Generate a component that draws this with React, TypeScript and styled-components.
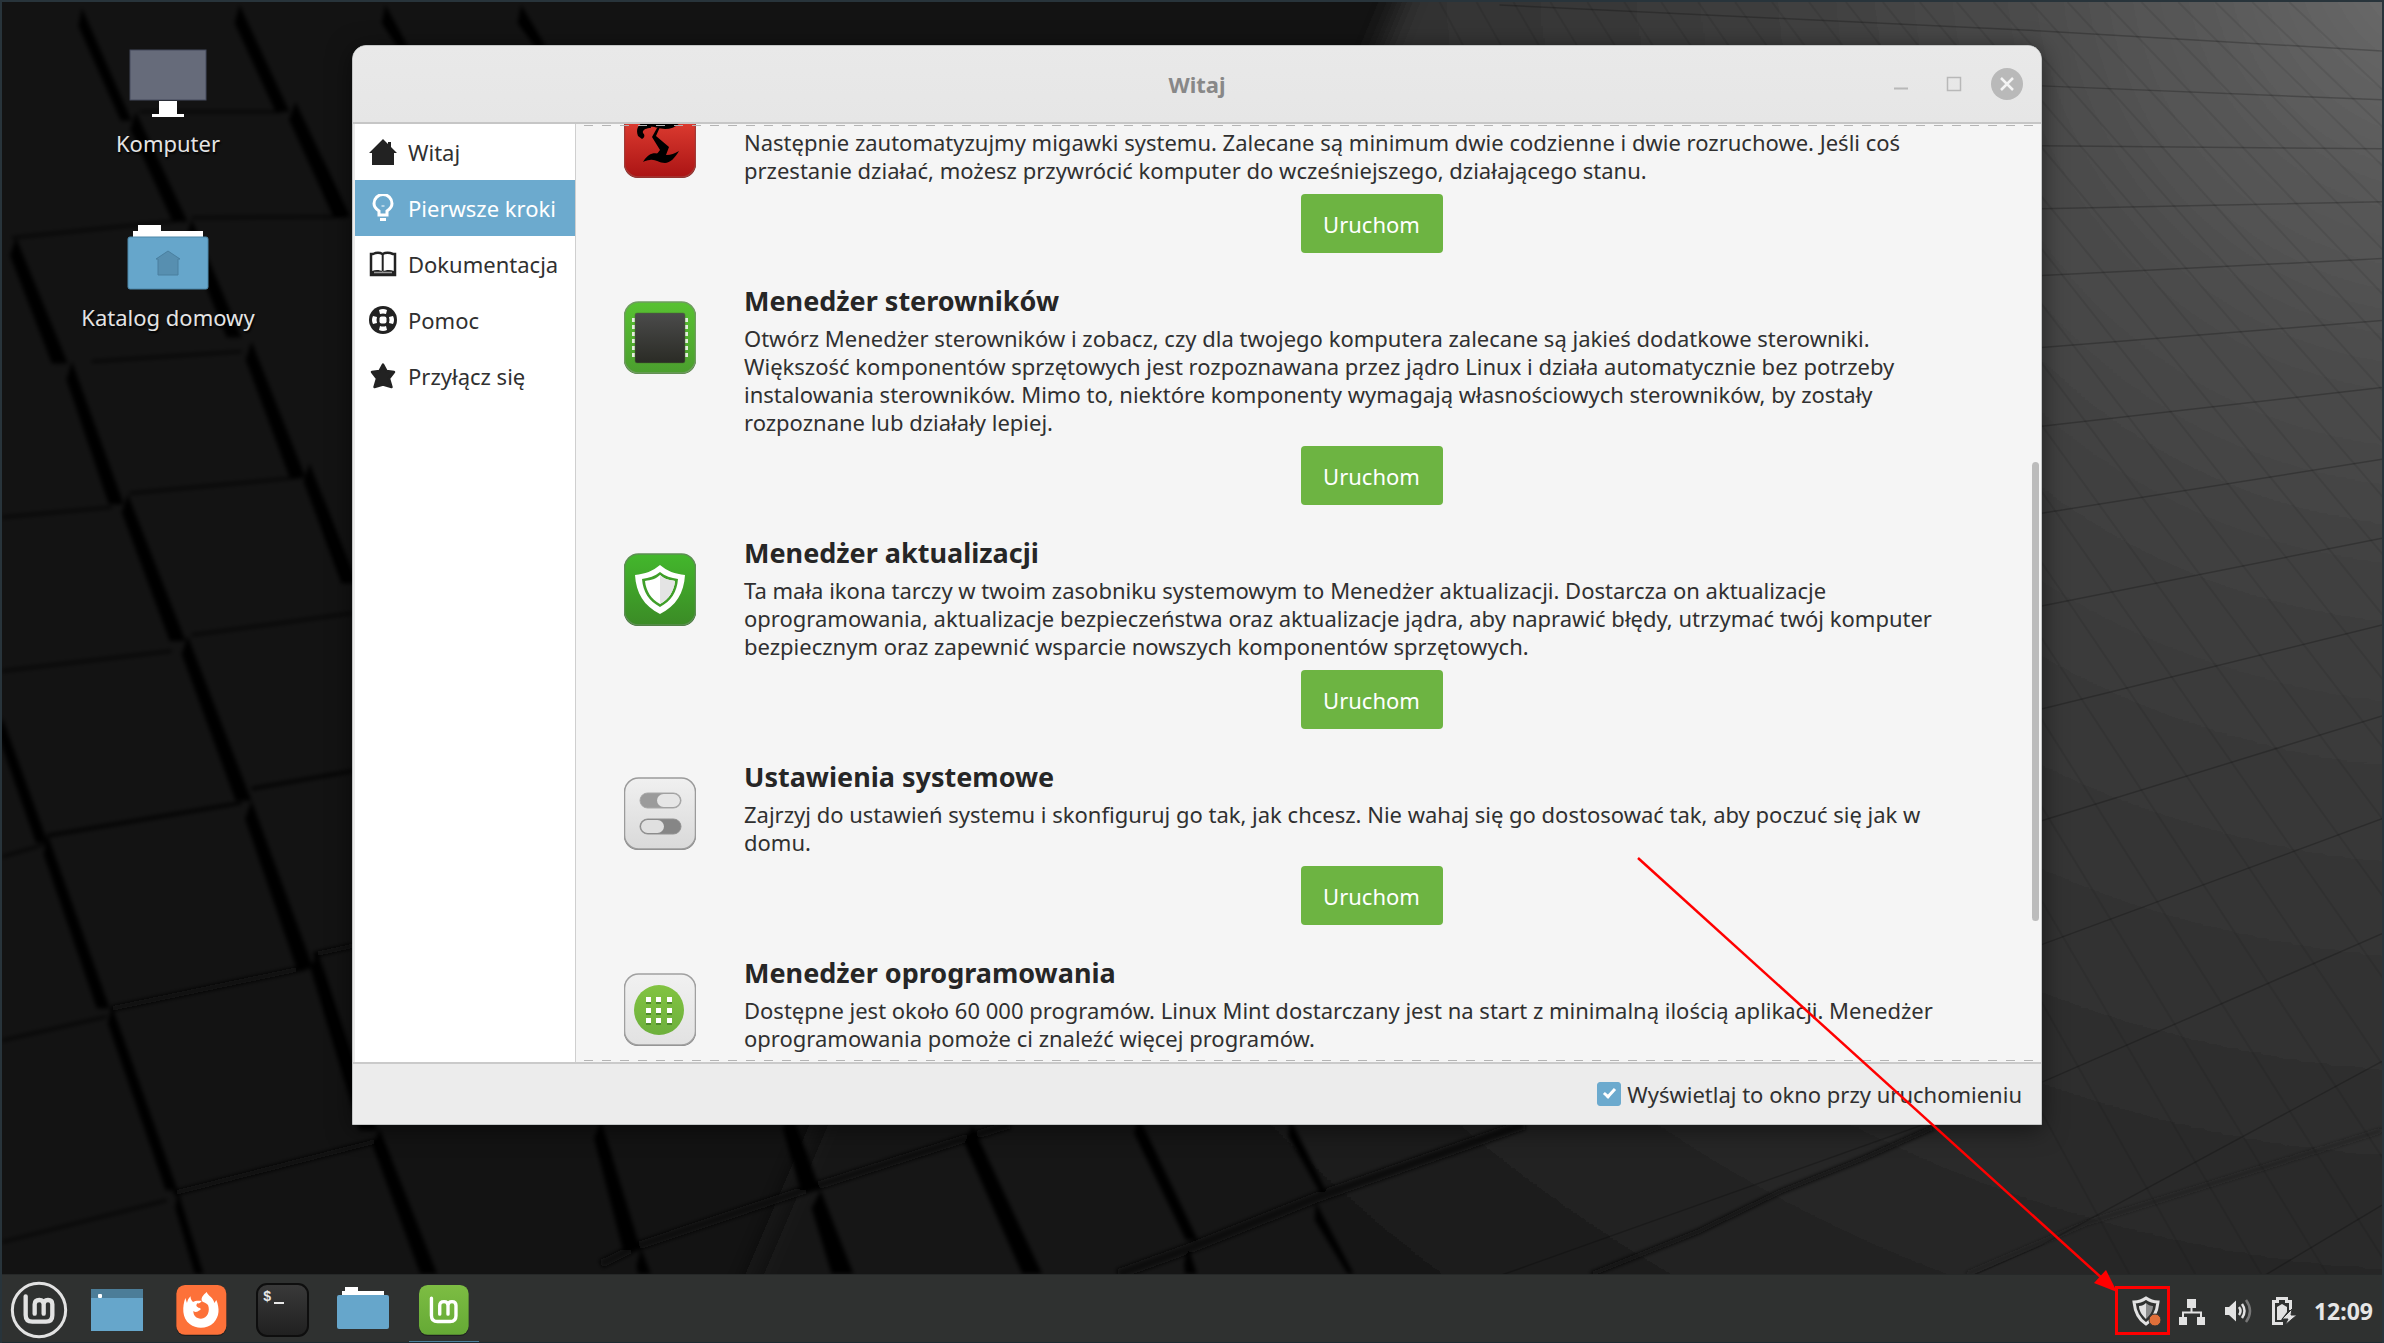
import React, { useState } from "react";
import styled, { createGlobalStyle } from "styled-components";

const GlobalStyle = createGlobalStyle`
  *, *::before, *::after { box-sizing: border-box; }
  body {
    margin: 0;
    font-family: "Noto Sans", "Open Sans", sans-serif;
    font-size: 22px;
    line-height: 28px;
    color: #303030;
  }
  button, input { font: inherit; color: inherit; }
  h2, p, ul { margin: 0; padding: 0; }
`;

const Screen = styled.div`
  position: relative;
  display: flex;
  flex-direction: column;
  min-height: 100vh;
  border: 2px solid #28343b;
  border-bottom: 0;
  background: #121212;
  overflow: hidden;
`;

const WallpaperArt = styled.svg`
  position: absolute;
  inset: 0;
  width: 100%;
  height: 100%;
`;

const Workspace = styled.main`
  position: relative;
  flex: 1;
  display: flex;
  min-height: 0;
`;

const Shortcuts = styled.div`
  flex: 0 0 350px;
  display: flex;
  flex-direction: column;
  align-items: center;
  gap: 36px;
  padding: 35px 18px 0 0;
`;

const Shortcut = styled.button`
  display: flex;
  flex-direction: column;
  align-items: center;
  gap: 2px;
  height: 138px;
  padding: 0;
  border: 0;
  background: none;
  color: #e4e4e4;
  text-shadow: 1px 2px 2px #000;

  svg { width: 90px; height: 90px; }
`;

const Window = styled.section`
  flex: 1;
  min-width: 0;
  display: flex;
  flex-direction: column;
  margin: 43px 340px 149px 0;
  border: 1px solid #c4c6c6;
  border-radius: 14px 14px 0 0;
  background: #ececec;
  box-shadow: 0 4px 24px rgba(0, 0, 0, 0.5);
  overflow: hidden;
`;

const TitleBar = styled.header`
  flex: 0 0 78px;
  display: grid;
  grid-template-columns: 1fr auto 1fr;
  align-items: center;
  padding: 0 18px;
  border-bottom: 2px solid #c6c6c6;
  background: linear-gradient(#e9e9e9, #e6e6e6);
`;

const Title = styled.h1`
  grid-column: 2;
  margin: 0;
  font-size: 22px;
  font-weight: 700;
  color: #888;
`;

const WindowControls = styled.div`
  display: flex;
  justify-content: flex-end;
  gap: 21px;
`;

const WindowControl = styled.button`
  display: flex;
  width: 32px;
  height: 32px;
  padding: 0;
  border: 0;
  background: none;

  svg { width: 32px; height: 32px; }
`;

const WindowBody = styled.div`
  flex: 1;
  min-height: 0;
  display: flex;
  padding-left: 2px;
`;

const Sidebar = styled.nav`
  flex: 0 0 221px;
  border-right: 1px solid #cfcfcf;
  background: #fff;
`;

const NavItem = styled.button<{ $active: boolean }>`
  display: flex;
  align-items: center;
  gap: 11px;
  width: 100%;
  height: 56px;
  padding: 0 0 0 14px;
  border: 0;
  background: ${(p) => (p.$active ? "#6caace" : "transparent")};
  color: ${(p) => (p.$active ? "#fff" : "#303030")};
  white-space: nowrap;

  svg { flex: none; width: 28px; height: 28px; }
`;

const Pane = styled.div`
  position: relative;
  flex: 1;
  min-width: 0;
  background: #f5f5f5;
  overflow: hidden;
`;

const OverflowHint = styled.div<{ $edge: "top" | "bottom" }>`
  position: absolute;
  left: 0;
  right: 0;
  ${(p) => p.$edge}: 1px;
  height: 1px;
  background: repeating-linear-gradient(90deg, transparent 0 8px, #b4b4b4 8px 17px, transparent 17px 18px);
`;

const ScrollThumb = styled.div`
  position: absolute;
  top: 36%;
  right: 2px;
  width: 7px;
  height: 49%;
  border-radius: 4px;
  background: #bcbcbc;
`;

const Steps = styled.ul`
  display: flex;
  flex-direction: column;
  gap: 31px;
  margin-top: -36px;
  padding: 0 42px 0 48px;
  list-style: none;
`;

const Step = styled.li`
  display: flex;
  align-items: flex-start;
  gap: 48px;
`;

const StepIcon = styled.svg`
  flex: none;
  width: 72px;
  height: 74px;
  margin-top: 17px;
`;

const StepContent = styled.div`
  flex: 1;
  min-width: 0;
  display: flex;
  flex-direction: column;
`;

const StepTitle = styled.h2`
  height: 36px;
  margin-bottom: 4px;
  font-size: 27px;
  line-height: 34px;
  font-weight: 700;
  color: #262626;
`;

const StepText = styled.p`
  white-space: pre;
`;

const LaunchButton = styled.button`
  align-self: center;
  width: 142px;
  height: 59px;
  margin-top: 10px;
  border: 0;
  border-radius: 4px;
  background: #6db442;
  color: #fff;
`;

const Footer = styled.footer`
  flex: 0 0 62px;
  display: flex;
  justify-content: flex-end;
  align-items: center;
  padding-right: 19px;
  border-top: 2px solid #cacaca;
`;

const StartupOption = styled.label`
  display: flex;
  align-items: center;
  gap: 6px;
  color: #303030;
`;

const TickBox = styled.input`
  appearance: none;
  width: 24px;
  height: 24px;
  margin: 0;
  border: 1px solid #6caace;
  border-radius: 3px;
  background: #fff;
  display: grid;
  place-items: center;

  &:checked { background: #6caace; }
  &:checked::after {
    content: "";
    width: 7px;
    height: 12px;
    margin-bottom: 4px;
    border: solid #fff;
    border-width: 0 3px 3px 0;
    transform: rotate(42deg);
  }
`;

const Taskbar = styled.footer`
  position: relative;
  flex: 0 0 69px;
  display: flex;
  align-items: stretch;
  padding: 0 9px 0 0;
  border-top: 1px solid #262828;
  border-bottom: 1px solid #1d2a30;
  background: #2f3130;
`;

const Launcher = styled.button<{ $active?: boolean }>`
  display: flex;
  align-items: center;
  justify-content: center;
  width: 81px;
  margin: 0;
  padding: 3px 0 0;
  border: 0;
  background: ${(p) => (p.$active ? "linear-gradient(#4d7f9b, #4d7f9b) 50% 100% / 70px 1px no-repeat" : "none")};

  svg { width: 60px; height: 60px; }
`;

const MenuButton = styled(Launcher)`
  width: 74px;
`;

const WindowLaunchers = styled.div`
  display: flex;
  margin-left: 3px;
`;

const Tray = styled.div`
  display: flex;
  align-items: center;
  margin-left: auto;
  padding-top: 4px;
`;

const TrayButton = styled.button<{ $marked?: boolean }>`
  position: relative;
  display: flex;
  align-items: center;
  justify-content: center;
  width: 46px;
  height: 46px;
  padding: 0;
  border: 0;
  background: none;

  svg { width: 32px; height: 32px; }

  &::after {
    content: ${(p) => (p.$marked ? '""' : "none")};
    position: absolute;
    inset: -2px -1px -1px -8px;
    border: 3px solid #f00;
  }
`;

const Clock = styled.time`
  padding: 0 0 0 7px;
  font-size: 23px;
  font-weight: 700;
  color: #e6e6e6;
`;

const Annotation = styled.svg`
  position: absolute;
  right: 0;
  bottom: 0;
  width: 800px;
  height: 500px;
  pointer-events: none;
`;

const ROWS: [number, number][] = [
  [29, 49], [84, 98], [144, 147], [207, 200], [274, 257], [346, 319], [425, 386], [512, 458],
  [605, 537], [708, 624], [820, 715], [944, 818], [1082, 933], [1245, 1061], [1409, 1205],
];

// Shadowed gaps between slabs: start x, start y, end x, end y, width at the end.
const GAPS: number[][] = [
  [80, 6, 130, 119, 11], [134, 110, 186, 220, 15], [190, 218, 240, 336, 15],
  [238, 3, 288, 110, 14], [294, 100, 349, 215, 17], [384, 3, 407, 45, 11], [520, 3, 545, 45, 11],
  [14, 236, 66, 362, 16], [70, 360, 122, 503, 15], [126, 493, 184, 640, 16],
  [186, 635, 250, 800, 16], [250, 800, 312, 968, 17], [316, 950, 376, 1130, 18], [378, 1128, 436, 1274, 17],
  [250, 340, 304, 476, 16], [308, 462, 356, 582, 16],
  [0, 716, 46, 842, 12], [46, 835, 108, 1008, 13], [110, 1005, 176, 1190, 12], [176, 1190, 202, 1274, 9],
  [600, 1120, 640, 1250, 18], [640, 1248, 650, 1274, 13],
  [790, 1110, 820, 1190, 20], [820, 1190, 853, 1274, 22], [972, 1125, 1042, 1274, 20],
  [1138, 1115, 1198, 1240, 12], [1188, 1246, 1197, 1274, 12], [1290, 1118, 1327, 1192, 7], [1316, 1202, 1354, 1274, 6],
];

const JOINTS: [string, number, string][] = [
  ["M600 1264 L636 1246 L812 1187 L975 1135 L1010 1124", 8, "#0b0b0b"],
  ["M1118 1274 L1190 1248 L1320 1196 L1525 1124", 10, "#0d0d0d"],
  ["M1592 1274 L1700 1231 L1780 1192 L1865 1158 L1935 1127", 4, "#0d0d0d"],
  ["M45 835 L240 802", 3, "#090909"], ["M250 788 L352 770", 3, "#090909"],
  ["M110 1008 L305 967", 5, "#080808"], ["M312 954 L352 945", 5, "#080808"],
  ["M172 1193 L378 1140", 5, "#080808"], ["M0 1242 L165 1200", 2, "#0b0b0b"],
  ["M0 516 L110 506 M128 492 L300 476", 2, "#101010"], ["M0 670 L170 650 M190 634 L352 612", 2, "#101010"],
  ["M138 110 L280 110 M190 216 L345 215 M10 236 L175 219 M90 360 L240 350", 2, "#101010"],
  ["M0 856 L45 843 M0 1040 L105 1016", 2, "#0c0c0c"],
  ["M1968 1274 L2090 1222 L2384 1130", 2, "#1e1e1e"],
];

const gapPoints = ([x1, y1, x2, y2, w]: number[]) =>
  `${x1},${y1} ${x2},${y2} ${x2 - w},${y2} ${x1 - w / 2 + 2},${y1 + 18}`;

function Wallpaper() {
  return (
    <WallpaperArt viewBox="0 0 2384 1343" preserveAspectRatio="none" aria-hidden="true">
      <defs>
        <radialGradient id="glow" gradientUnits="userSpaceOnUse" cx="2450" cy="-50" r="1800">
          <stop offset="0" stopColor="#707070" />
          <stop offset=".12" stopColor="#5b5b5b" />
          <stop offset=".25" stopColor="#4a4a4a" />
          <stop offset=".39" stopColor="#3d3d3d" />
          <stop offset=".55" stopColor="#343434" />
          <stop offset=".74" stopColor="#282828" />
          <stop offset=".86" stopColor="#1f1f1f" />
          <stop offset="1" stopColor="#131313" />
        </radialGradient>
        <filter id="softEdge"><feGaussianBlur stdDeviation="14" /></filter>
        <filter id="softGap"><feGaussianBlur stdDeviation="2" /></filter>
      </defs>
      <rect width="2384" height="1343" fill="#131313" />
      <path d="M1425 -60 L1375 60 L1000 700 L700 1400 L2500 1400 L2500 -60 Z" fill="url(#glow)" filter="url(#softEdge)" />
      <g filter="url(#softGap)">
        {JOINTS.map(([d, width, color]) => <path key={d} d={d} stroke={color} strokeWidth={width} fill="none" />)}
        {GAPS.map((gap) => <polygon key={gap.join()} points={gapPoints(gap)} fill="#050505" />)}
      </g>
      <g stroke="#000" fill="none">
        {ROWS.map(([left, right]) => (
          <path key={left} d={`M1500 ${left - (right - left) * 1.3} L2043 ${left} L2384 ${right}`} strokeOpacity=".22" strokeWidth="1.5" />
        ))}
        {Array.from({ length: 24 }, (_, i) => i - 11).map((i) => (
          <path key={i} d={`M${1847 + i * 37} 0 L${2857 + i * 66} 1274`} strokeOpacity=".08" strokeWidth="2" />
        ))}
      </g>
    </WallpaperArt>
  );
}

const MonitorIcon = () => (
  <svg viewBox="0 0 90 90">
    <rect x="7" y="13" width="76" height="50" fill="#666b7a" stroke="#444a5c" />
    <path d="M36 64h18v13h7v3H29v-3h7z" fill="#fff" />
  </svg>
);

const HomeFolderIcon = () => (
  <svg viewBox="0 0 90 90">
    <path d="M10 27v-7h5v-6h23v6h42v7z" fill="#fff" />
    <rect x="5" y="26" width="80" height="52" rx="2" fill="#66a6cb" stroke="#4d87a8" />
    <path d="M45 40l12 8h-2v16H35V48h-2z" fill="#578fb0" stroke="#4a7f9e" />
  </svg>
);

const MinimizeIcon = () => (<svg viewBox="0 0 32 32"><path d="M9 20.500h14" stroke="#b8b8b8" strokeWidth="2" /></svg>);
const MaximizeIcon = () => (<svg viewBox="0 0 32 32"><rect x="9.500" y="9.500" width="13" height="13" fill="none" stroke="#b8b8b8" strokeWidth="1.500" /></svg>);
const CloseIcon = () => (
  <svg viewBox="0 0 32 32">
    <circle cx="16" cy="16" r="16" fill="#b9b9b9" />
    <path d="M10 10l12 12M22 10L10 22" stroke="#f4f4f4" strokeWidth="2.500" />
  </svg>
);

const HouseIcon = () => (
  <svg viewBox="0 0 28 28"><path d="M14 1l5 5V4h3v5l6 6h-3v12H3V15H0z" fill="#222" /></svg>
);
const BulbIcon = () => (
  <svg viewBox="0 0 28 28">
    <path d="M10 21v-4C7 15 5 12.500 5 9.500a9 9 0 0 1 18 0c0 3-2 5.500-5 7.500v4z" fill="none" stroke="#fff" strokeWidth="3" />
    <path d="M11 24h6v3h-6z" fill="#fff" /><path d="M12.500 11h3v2h-3z" fill="#fff" opacity=".5" />
  </svg>
);
const BookIcon = () => (
  <svg viewBox="0 0 28 28">
    <path d="M2 25V4h2c3-1.500 7-1.500 9.500 0 3-1.500 7-1.500 10.500 0h2v21z" fill="#fff" stroke="#222" strokeWidth="2.500" />
    <path d="M13.700 4v17" stroke="#222" strokeWidth="2" />
    <path d="M3 25V21c4-1.500 8-1 10.700.5 3-1.500 7-2 11.300-.5v4z" fill="#222" />
    <path d="M5 22.500h18" stroke="#999" strokeWidth="1.500" />
  </svg>
);
const HelpIcon = () => (
  <svg viewBox="0 0 28 28">
    <circle cx="14" cy="14" r="14" fill="#222" />
    <g fill="#fff">
      <rect x="10.500" y="10.500" width="7" height="7" rx="2" />
      <path d="M10 4q4-2 8 0l-1 4q-3-1-6 0zM10 24q4 2 8 0l-1-4q-3 1-6 0zM4 10q-2 4 0 8l4-1q-1-3 0-6zM24 10q2 4 0 8l-4-1q1-3 0-6z" />
    </g>
  </svg>
);
const StarIcon = () => (
  <svg viewBox="0 0 28 28">
    <path d="M14 2.500l3.500 6.500 7.500 1-5 6.500 2.500 8.500-8.500-2.500-8.500 2.500 2.500-8.500L3 10l7.500-1z" fill="#222" stroke="#222" strokeWidth="2.500" strokeLinejoin="round" />
  </svg>
);

function TileFrame({ id, from, to, edge, dark }: { id: string; from: string; to: string; edge: string; dark: string }) {
  return (
    <>
      <defs><linearGradient id={id} x2="0" y2="1"><stop stopColor={from} /><stop offset="1" stopColor={to} /></linearGradient></defs>
      <rect x="0" y="2" width="72" height="71" rx="14" fill={dark} />
      <rect x=".5" y="1" width="71" height="71" rx="14" fill={`url(#${id})`} stroke={edge} strokeWidth="1.500" />
    </>
  );
}

const BackupTile = () => (
  <StepIcon viewBox="0 0 72 74">
    <TileFrame id="tileRed" from="#ea4638" to="#ab1414" edge="#a33a36" dark="#6d2020" />
    <path d="M26 18C15 15 11 24 14 31l4 3c3-2 3-4 1-6-1-3 3-5 8-5z" />
    <path d="M20 17c10-5 24 3 38-3-2 6-9 10-17 10-7 0-10-3-17-2z" />
    <path d="M36 22l-4 9 13 11-3 8-13 4 7-9-8-13 5-9z" />
    <path d="M19 57c5-9 11-10 17-8 8 2 12 1 19-3-4 7-9 12-14 12-6 0-10-4-15-3-3 0-5 1-7 2z" />
  </StepIcon>
);

const DriverTile = () => (
  <StepIcon viewBox="0 0 72 74">
    <TileFrame id="tileGreen" from="#58c232" to="#4b9e2e" edge="#6f9c60" dark="#3c6b2c" />
    <defs><linearGradient id="chip" x2="0" y2="1"><stop stopColor="#4b4b4b" /><stop offset="1" stopColor="#2a2b25" /></linearGradient></defs>
    {[17, 24, 31, 38, 45, 52].map((y) => <path key={y} d={`M8 ${y}h56v4H8z`} fill="#e4eede" />)}
    <rect x="11" y="12" width="50" height="50" rx="2" fill="url(#chip)" stroke="#44722f" strokeWidth=".5" />
  </StepIcon>
);

const UpdateTile = () => (
  <StepIcon viewBox="0 0 72 74">
    <TileFrame id="tileShield" from="#43b72c" to="#3b8b26" edge="#5c8f52" dark="#2c5a22" />
    <path d="M36 12c7 6 15 9 25 10-1 18-9 31-25 39-16-8-24-21-25-39 10-1 18-4 25-10z" fill="#fff" />
    <path d="M36 19c5 4 11 6 18 7-1 13-7 22-18 28-11-6-17-15-18-28 7-1 13-3 18-7z" fill="#3f9f29" />
    <path d="M36 22c4 4 9 5 15 6-1 10-6 18-15 23-9-5-14-13-15-23 6-1 11-2 15-6z" fill="#fff" />
    <path d="M36 22c4 4 9 5 15 6-1 10-6 18-15 23z" fill="#e4e4e4" />
  </StepIcon>
);

const SettingsTile = () => (
  <StepIcon viewBox="0 0 72 74">
    <TileFrame id="tileGray" from="#f0f0f0" to="#d9d9d9" edge="#9b9b9b" dark="#7b7b7b" />
    <rect x="16" y="16" width="41" height="15" rx="7.500" fill="#9b9b9b" stroke="#a8a8a8" />
    <rect x="33" y="17" width="23" height="13" rx="6.500" fill="#e6e6e6" />
    <rect x="16" y="42" width="41" height="15" rx="7.500" fill="#868686" stroke="#929292" />
    <rect x="17" y="43" width="23" height="13" rx="6.500" fill="#e0e0e0" />
  </StepIcon>
);

const SoftwareTile = () => (
  <StepIcon viewBox="0 0 72 74">
    <TileFrame id="tileLight" from="#f1f1f1" to="#e2e2e2" edge="#a0a0a0" dark="#747474" />
    <defs><linearGradient id="disc" x2="0" y2="1"><stop stopColor="#82c341" /><stop offset="1" stopColor="#6db03c" /></linearGradient></defs>
    <circle cx="35" cy="37" r="25" fill="url(#disc)" />
    {[24, 35, 45].map((y) => [22, 32, 43].map((x) => (
      <g key={`${x}-${y}`}><rect x={x} y={y + 1} width="5" height="6" fill="#4f8a2c" /><rect x={x} y={y} width="5" height="5" fill="#fff" /></g>
    )))}
  </StepIcon>
);

const LM = "M77 142 V198 Q77 218 97 218 H138 Q157 218 157 199 V166 Q157 153 144 153 Q131 153 131 166 V194 M131 166 Q131 153 118 153 Q104 153 104 166 V194";

const MintMenuIcon = () => (
  <svg viewBox="27 93 180 180" fill="none" stroke="#e2e2e2">
    <circle cx="117" cy="183" r="80" strokeWidth="9" />
    <path d={LM} strokeWidth="13" strokeLinecap="round" />
  </svg>
);
const DesktopIcon = () => (
  <svg viewBox="0 0 60 60">
    <rect x="4" y="9" width="52" height="42" fill="#66a6cb" />
    <rect x="4" y="9" width="52" height="9" fill="#4c7d98" />
    <rect x="11" y="14" width="4" height="4" rx="1" fill="#fff" />
  </svg>
);
const FirefoxIcon = () => (
  <svg viewBox="514 87 180 180">
    <rect x="530" y="105" width="150" height="150" rx="26" fill="#1f2020" />
    <rect x="530" y="102" width="150" height="149" rx="26" fill="#fd7139" />
    <path d="M557 141C548 165 546 202 571 220C590 235 624 234 642 215C660 196 660 172 650 147L644 156C642 140 626 136 621 123C610 132 603 141 607 150C596 148 586 149 580 153C574 148 572 141 573 136C566 142 564 148 562 156Z" fill="#fff" />
    <path d="M606 150C612 154 620 156 625 162C632 180 624 202 604 203C590 203 581 194 581 180C588 186 594 182 600 178C606 174 602 170 596 170C590 166 588 164 593 157C598 158 603 156 606 150Z" fill="#fd7139" />
  </svg>
);
const TerminalIcon = () => (
  <svg viewBox="0 0 60 60">
    <defs><linearGradient id="term" x2="0" y2="1"><stop stopColor="#3a3a3a" /><stop offset="1" stopColor="#202020" /></linearGradient></defs>
    <rect x="5" y="4" width="51" height="52" rx="10" fill="url(#term)" stroke="#0e0e0e" strokeWidth="2" />
    <text x="11" y="21" fill="#e8e8e8" fontFamily="Liberation Mono, monospace" fontWeight="700" fontSize="14">$</text>
    <path d="M22 23h10" stroke="#e8e8e8" strokeWidth="2" />
  </svg>
);
const FilesIcon = () => (
  <svg viewBox="0 0 60 60">
    <path d="M9 17v-6h3V7h13v4h26v6z" fill="#fff" />
    <rect x="4" y="15" width="52" height="34" rx="2" fill="#66a6cb" />
  </svg>
);
const WelcomeIcon = () => (
  <svg viewBox="1240 87 180 180">
    <defs><linearGradient id="mint" x2="0" y2="1"><stop stopColor="#7dbd43" /><stop offset="1" stopColor="#65a935" /></linearGradient></defs>
    <rect x="1255" y="105" width="149" height="150" rx="26" fill="#1f2020" />
    <rect x="1255" y="102" width="149" height="149" rx="26" fill="url(#mint)" />
    <path transform="translate(1221.500 11) scale(.92)" d={LM} fill="none" stroke="#fff" strokeWidth="11" strokeLinecap="round" />
  </svg>
);

const UpdateShieldIcon = () => (
  <svg viewBox="0 0 32 32">
    <path d="M16 3c4 3 8 4 12 4-1 10-4 17-12 22C8 24 5 17 4 7c4 0 8-1 12-4z" fill="none" stroke="#e2e2e2" strokeWidth="3" />
    <path d="M16 8v16c-4-4-7-8-7-13 3 0 5-1 7-3z" fill="#e2e2e2" />
    <path d="M16 8v16c4-4 7-8 7-13-3 0-5-1-7-3z" fill="#8d8e8e" />
    <circle cx="25" cy="25" r="6" fill="#e0703a" stroke="#2f3130" strokeWidth="1" />
  </svg>
);
const NetworkIcon = () => (
  <svg viewBox="0 0 32 32" fill="#e2e2e2">
    <path d="M11 4h9v9h-9zM3 22h8v8H3zM21 22h8v8h-8z" />
    <path d="M15.500 12v5M7 22v-4.500h18V22" fill="none" stroke="#e2e2e2" strokeWidth="2" />
  </svg>
);
const VolumeIcon = () => (
  <svg viewBox="0 0 32 32">
    <path d="M3 12h4l7-6.500v21L7 20H3z" fill="#e2e2e2" />
    <path d="M17 12q3 4 0 8M20 9q5 7 0 14" fill="none" stroke="#e2e2e2" strokeWidth="2.500" />
    <path d="M24 5q8 11 0 22" fill="none" stroke="#777" strokeWidth="2.500" />
  </svg>
);
const BatteryIcon = () => (
  <svg viewBox="0 0 32 32">
    <path d="M15 28.500H5.500V6.500h4v-3h9v3h4V15" fill="none" stroke="#e2e2e2" strokeWidth="3" />
    <path d="M9 25V12l5-3 5 3v5l-6 8z" fill="#e2e2e2" />
    <path d="M24 14L14 24h6l-3 6 12-10h-6z" fill="#e2e2e2" stroke="#2f3130" strokeWidth="1" />
  </svg>
);

const NAV = [
  { label: "Witaj", Icon: HouseIcon },
  { label: "Pierwsze kroki", Icon: BulbIcon },
  { label: "Dokumentacja", Icon: BookIcon },
  { label: "Pomoc", Icon: HelpIcon },
  { label: "Przyłącz się", Icon: StarIcon },
];

const STEPS = [
  {
    title: "",
    Icon: BackupTile,
    lines: [
      "Następnie zautomatyzujmy migawki systemu. Zalecane są minimum dwie codzienne i dwie rozruchowe. Jeśli coś",
      "przestanie działać, możesz przywrócić komputer do wcześniejszego, działającego stanu.",
    ],
    launch: true,
  },
  {
    title: "Menedżer sterowników",
    Icon: DriverTile,
    lines: [
      "Otwórz Menedżer sterowników i zobacz, czy dla twojego komputera zalecane są jakieś dodatkowe sterowniki.",
      "Większość komponentów sprzętowych jest rozpoznawana przez jądro Linux i działa automatycznie bez potrzeby",
      "instalowania sterowników. Mimo to, niektóre komponenty wymagają własnościowych sterowników, by zostały",
      "rozpoznane lub działały lepiej.",
    ],
    launch: true,
  },
  {
    title: "Menedżer aktualizacji",
    Icon: UpdateTile,
    lines: [
      "Ta mała ikona tarczy w twoim zasobniku systemowym to Menedżer aktualizacji. Dostarcza on aktualizacje",
      "oprogramowania, aktualizacje bezpieczeństwa oraz aktualizacje jądra, aby naprawić błędy, utrzymać twój komputer",
      "bezpiecznym oraz zapewnić wsparcie nowszych komponentów sprzętowych.",
    ],
    launch: true,
  },
  {
    title: "Ustawienia systemowe",
    Icon: SettingsTile,
    lines: [
      "Zajrzyj do ustawień systemu i skonfiguruj go tak, jak chcesz. Nie wahaj się go dostosować tak, aby poczuć się jak w",
      "domu.",
    ],
    launch: true,
  },
  {
    title: "Menedżer oprogramowania",
    Icon: SoftwareTile,
    lines: [
      "Dostępne jest około 60 000 programów. Linux Mint dostarczany jest na start z minimalną ilością aplikacji. Menedżer",
      "oprogramowania pomoże ci znaleźć więcej programów.",
    ],
    launch: false,
  },
];

export default function App() {
  const [page, setPage] = useState(1);
  const [showAtStartup, setShowAtStartup] = useState(true);

  return (
    <>
      <GlobalStyle />
      <Screen>
        <Wallpaper />
        <Workspace>
          <Shortcuts>
            <Shortcut><MonitorIcon />Komputer</Shortcut>
            <Shortcut><HomeFolderIcon />Katalog domowy</Shortcut>
          </Shortcuts>
          <Window>
            <TitleBar>
              <Title>Witaj</Title>
              <WindowControls>
                <WindowControl><MinimizeIcon /></WindowControl>
                <WindowControl><MaximizeIcon /></WindowControl>
                <WindowControl><CloseIcon /></WindowControl>
              </WindowControls>
            </TitleBar>
            <WindowBody>
              <Sidebar>
                {NAV.map(({ label, Icon }, i) => (
                  <NavItem key={label} $active={i === page} onClick={() => setPage(i)}>
                    <Icon />{label}
                  </NavItem>
                ))}
              </Sidebar>
              <Pane>
                <Steps>
                  {STEPS.map(({ title, Icon, lines, launch }) => (
                    <Step key={lines[0]}>
                      <Icon />
                      <StepContent>
                        <StepTitle>{title}</StepTitle>
                        <StepText>{lines.join("\n")}</StepText>
                        {launch && <LaunchButton>Uruchom</LaunchButton>}
                      </StepContent>
                    </Step>
                  ))}
                </Steps>
                <OverflowHint $edge="top" />
                <OverflowHint $edge="bottom" />
                <ScrollThumb />
              </Pane>
            </WindowBody>
            <Footer>
              <StartupOption>
                <TickBox type="checkbox" checked={showAtStartup} onChange={(e) => setShowAtStartup(e.target.checked)} />
                Wyświetlaj to okno przy uruchomieniu
              </StartupOption>
            </Footer>
          </Window>
        </Workspace>
        <Taskbar>
          <MenuButton><MintMenuIcon /></MenuButton>
          <Launcher><DesktopIcon /></Launcher>
          <WindowLaunchers>
            <Launcher><FirefoxIcon /></Launcher>
            <Launcher><TerminalIcon /></Launcher>
            <Launcher><FilesIcon /></Launcher>
            <Launcher $active><WelcomeIcon /></Launcher>
          </WindowLaunchers>
          <Tray>
            <TrayButton $marked><UpdateShieldIcon /></TrayButton>
            <TrayButton><NetworkIcon /></TrayButton>
            <TrayButton><VolumeIcon /></TrayButton>
            <TrayButton><BatteryIcon /></TrayButton>
            <Clock>12:09</Clock>
          </Tray>
        </Taskbar>
        <Annotation viewBox="1582 843 800 500" aria-hidden="true">
          <path d="M1638 858L2104 1280" stroke="#f00" strokeWidth="2.500" />
          <path d="M2117 1292L2106 1270L2094 1283Z" fill="#f00" />
        </Annotation>
      </Screen>
    </>
  );
}
